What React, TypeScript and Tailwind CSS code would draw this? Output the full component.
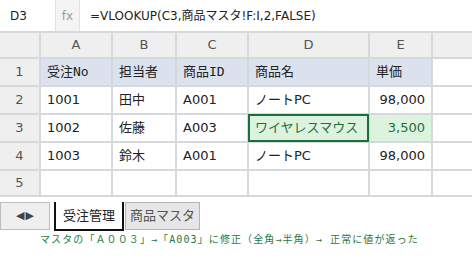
import React from 'react';

const COLS = ['A', 'B', 'C', 'D', 'E'];

type Cell = { text: string; right?: boolean };

const ROWS: Cell[][] = [
  [{ text: '1001' }, { text: '田中' }, { text: 'A001' }, { text: 'ノートPC' }, { text: '98,000', right: true }],
  [{ text: '1002' }, { text: '佐藤' }, { text: 'A003' }, { text: 'ワイヤレスマウス' }, { text: '3,500', right: true }],
  [{ text: '1003' }, { text: '鈴木' }, { text: 'A001' }, { text: 'ノートPC' }, { text: '98,000', right: true }],
];

const HEAD = ['受注No', '担当者', '商品ID', '商品名', '単価'];

export default function App() {
  return (
    <div className="w-[472px] h-[266px] overflow-hidden bg-white text-[13px] text-[#222] font-['DejaVu_Sans','Noto_Sans_CJK_JP',sans-serif]">
      {/* formula bar */}
      <div className="flex h-[33px] border-b-2 border-[#d5d8dc] text-[12px]">
        <div className="w-[55px] pl-[10px] flex items-center">D3</div>
        <div className="w-[25px] flex items-center justify-center bg-[#f4f4f4] border-x border-[#dfe1e4] text-[#9a9a9a]">fx</div>
        <div className="pl-[10px] flex items-center">=VLOOKUP(C3,商品マスタ!F:I,2,FALSE)</div>
      </div>

      {/* sheet grid */}
      <div className="grid grid-cols-[39px_70px_62px_70px_119px_61px_1fr] grid-rows-[24px_26px_26px_26px_26px_24px] gap-[2px] bg-[#d5d8dc] border-b-2 border-[#d5d8dc]">
        <div className="bg-[#efefef]" />
        {COLS.map((c) => (
          <div key={c} className="bg-[#efefef] flex items-center justify-center text-[#555]">{c}</div>
        ))}
        <div className="bg-[#efefef]" />

        <div className="bg-[#efefef] flex items-center justify-center text-[#555]">1</div>
        {HEAD.map((h) => (
          <div key={h} className="bg-[#dbe2ee] flex items-center px-[6px] font-['DejaVu_Sans_Mono','Noto_Sans_CJK_JP',monospace]">{h}</div>
        ))}
        <div className="bg-white" />

        {ROWS.map((row, i) => (
          <React.Fragment key={i}>
            <div className="bg-[#efefef] flex items-center justify-center text-[#555]">{i + 2}</div>
            {row.map((cell, j) => {
              const sel = i === 1 && (j === 3 || j === 4);
              return (
                <div
                  key={j}
                  className={`relative flex items-center px-[6px] ${cell.right ? 'justify-end' : ''} ${sel ? 'bg-[#dcf3df] text-[#1e6e3c]' : 'bg-white'}`}
                >
                  {cell.text}
                  {i === 1 && j === 3 && (
                    <div className="absolute -inset-[1px] border-2 border-[#1e6e3c]" />
                  )}
                </div>
              );
            })}
            <div className="bg-white" />
          </React.Fragment>
        ))}

        <div className="bg-[#efefef] flex items-center justify-center text-[#555]">5</div>
        {COLS.map((c) => (
          <div key={c} className="bg-white" />
        ))}
        <div className="bg-white" />
      </div>

      {/* sheet tabs */}
      <div className="flex items-start pt-[5px] h-[33px]">
        <div className="w-[50px] h-[28px] bg-[#efefef] border border-[#bdbdbd] flex items-center justify-center gap-[1px] text-[11px] text-[#444]">
          <span>◀</span><span>▶</span>
        </div>
        <div className="ml-[4px] w-[70px] h-[29px] bg-white border-x-2 border-b-2 border-[#111] flex items-center justify-center">受注管理</div>
        <div className="ml-[1px] w-[75px] h-[28px] bg-[#e6e6e6] border border-[#b5b5b5] flex items-center justify-center text-[#555]">商品マスタ</div>
      </div>

      {/* status */}
      <p className="mt-[3px] pl-[40px] leading-[14px] text-[10px] tracking-[1.1px] text-[#1f7a3f] font-['DejaVu_Sans_Mono','Noto_Sans_CJK_JP',monospace] whitespace-nowrap">
        マスタの「Ａ００３」→「A003」に修正（全角→半角）→ 正常に値が返った
      </p>
    </div>
  );
}
